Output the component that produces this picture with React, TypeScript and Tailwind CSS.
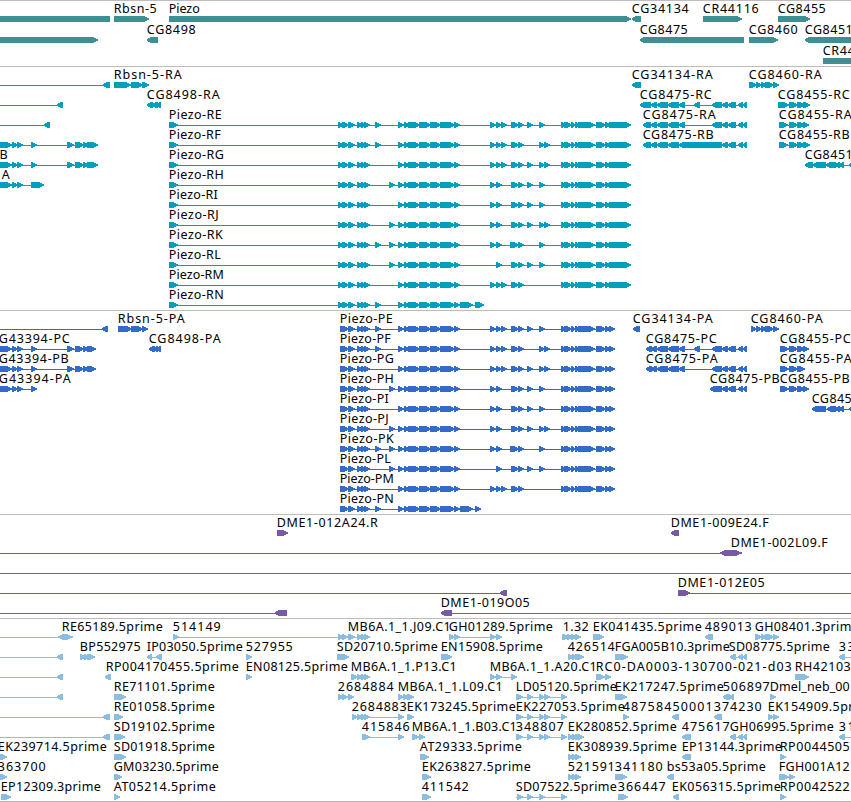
type Label = [x: number, text: string, width: number];
// Each glyph string holds marks separated by spaces: ">a:b" and "<a:b" are
// exons pointing right or left, "=a:b" is a plain bar, "-a:b" an intron line,
// "*a:b" a bar that is pointed at both ends.
type Row = { labels: Label[]; marks: string };
type TrackData = { name: string; color: string; pitch: number; height: number; rows: Row[] };

const r = (marks: string, ...labels: Label[]): Row => ({ marks, labels });

function shape(mark: string): string {
  const [a, b] = mark.slice(1).split(':').map(Number);
  const n = Math.min(5, b - a);
  switch (mark[0]) {
    case '-':
      return `M${a} 3H${b}V4H${a}Z`;
    case '=':
      return `M${a} 0H${b}V6H${a}Z`;
    case '>':
      return `M${a} 0H${b - n + 1}L${b + 0.5} 2.4V3.6L${b - n + 1} 6H${a}Z`;
    case '<':
      return `M${b} 0H${a + n - 1}L${a - 0.5} 2.4V3.6L${a + n - 1} 6H${b}Z`;
    default:
      return `M${a - 0.5} 2.4L${a + n} 0H${b - n}L${b + 0.5} 2.4V3.6L${b - n} 6H${a + n}L${a - 0.5} 3.6Z`;
  }
}

const MID: Record<string, string> = {
  a: '>375:380', b: '>389:394', c: '>490:495', d: '>496:501', e: '>501:506',
  f: '>511:518', F: '>510:518', g: '>518:523', h: '>527:532', i: '>539:544', j: '>544:549',
};
const HEAD = '>342:348 >348:354 >357:362 >361:365 >364:369';
const BODY = '>398:403 >404:409 >408:419 >419:430 >430:440 >440:454 >454:459';
const TAIL = '>561:566 >564:571 >571:575 >575:579 >578:594 >596:605 >605:610';

const pick = (keys: string) => keys.split('').map((k) => MID[k]).join(' ');
const piezoR = (k: string) => `-169:630 >169:177 >338:343 ${HEAD} ${BODY} ${TAIL} >609:630 ${pick(k)}`;
const piezoP = (k: string) => `-340:614 >340:344 ${HEAD} ${BODY} ${TAIL} >609:614 ${pick(k)}`;

const V = {
  E: 'acdefghi',
  F: 'acdefgij',
  G: 'cdefghij',
  H: 'bcdfghi',
  I: 'cdfghi',
  J: 'bcdfghij',
  K: 'abcdFgi',
  L: 'bdfghi',
  M: 'cdefg',
};

const LEFT_START = '>0:11 >12:17 >17:22';
const LEFT = `-0:90 ${LEFT_START} >31:36 >67:73 >75:83 >83:88`;
const C75_A = '<651:657 <657:668 <668:679';
const C75_B = '<722:728 <728:736 <738:743 <743:747';
const C55 = '>789:797 >797:804';
const LD = '-516:562 >516:522 >527:532 >539:544 >544:549 >561:566';
const SD = '-730:747 <730:736 <738:743 <743:747';

const TRACKS: TrackData[] = [
  {
    name: 'genes',
    color: '#3f8e94',
    pitch: 21,
    height: 66,
    rows: [
      r('=0:110 >114:148 >169:630 <632:641 >703:741 >778:809',
        [114, 'Rbsn-5', 43], [169, 'Piezo', 31], [632, 'CG34134', 57], [703, 'CR44116', 56], [778, 'CG8455', 48]),
      r('>0:97 <147:158 <640:744 >749:777 <805:860',
        [147, 'CG8498', 49], [640, 'CG8475', 48], [749, 'CG8460', 49], [805, 'CG8451', 48]),
      r('=823:860', [823, 'CR44', 32]),
    ],
  },
  {
    name: 'transcripts',
    color: '#009ebf',
    pitch: 20,
    height: 244,
    rows: [
      r('-0:105 <103:110 -114:148 >114:130 >131:142 >142:148 <632:641 -749:778 >749:756 >756:761 >761:766 >765:773 >773:778',
        [114, 'Rbsn-5-RA', 68], [632, 'CG34134-RA', 81], [749, 'CG8460-RA', 73]),
      r(`-0:60 <57:63 <147:153 <152:158 <157:161 -640:747 <640:651 ${C75_A} <679:685 <694:700 <712:722 ${C75_B} -778:809 >778:788 ${C55} >803:809`,
        [147, 'CG8498-RA', 73], [640, 'CG8475-RC', 72], [778, 'CG8455-RC', 72]),
      r(`-0:47 <44:50 ${piezoR(V.E)} -643:747 <643:651 ${C75_A} <679:685 <712:722 ${C75_B} -779:808 >779:787 ${C55} >803:808`,
        [169, 'Piezo-RE', 53], [643, 'CG8475-RA', 73], [779, 'CG8455-RA', 73]),
      r(`${LEFT} >87:97 ${piezoR(V.F)} -643:747 <643:651 ${C75_A} <679:722 ${C75_B} -779:809 >779:787 ${C55} >803:809`,
        [169, 'Piezo-RF', 52], [643, 'CG8475-RB', 71], [779, 'CG8455-RB', 71]),
      r(`${LEFT} >87:97 ${piezoR(V.G)} -805:851 <805:813 <813:826 <826:836 <835:840 <839:844 <849:856`,
        [-8, 'RB', 16], [169, 'Piezo-RG', 55], [805, 'CG8451', 48]),
      r(`-0:43 ${LEFT_START} >31:43 ${piezoR(V.H)}`, [-8, 'RA', 18], [169, 'Piezo-RH', 55]),
      r(piezoR(V.I), [169, 'Piezo-RI', 49]),
      r(piezoR(V.J), [169, 'Piezo-RJ', 50]),
      r(piezoR(V.K), [169, 'Piezo-RK', 54]),
      r(piezoR(V.L), [169, 'Piezo-RL', 52]),
      r(piezoR(V.M), [169, 'Piezo-RM', 55]),
      r(`-169:483 >169:177 >338:343 ${HEAD} >375:380 ${BODY} >460:472 >475:483`, [169, 'Piezo-RN', 55]),
    ],
  },
  {
    name: 'proteins',
    color: '#326ccb',
    pitch: 20,
    height: 204,
    rows: [
      r(`-0:105 <102:108 -118:147 >118:131 >131:142 >142:147 ${piezoP(V.E)} <633:640 >751:756 >756:761 >761:766 >765:773 >773:778`,
        [118, 'Rbsn-5-PA', 67], [340, 'Piezo-PE', 53], [633, 'CG34134-PA', 80], [751, 'CG8460-PA', 72]),
      r(`${LEFT} >87:95 <149:155 <154:158 <157:161 ${piezoP(V.F)} -646:747 <646:652 ${C75_A} <679:685 <694:700 <712:722 ${C75_B} -780:808 >780:788 ${C55} >803:808`,
        [-1, 'G43394-PC', 71], [149, 'CG8498-PA', 72], [340, 'Piezo-PF', 51], [646, 'CG8475-PC', 71], [780, 'CG8455-PC', 71]),
      r(`${LEFT} >87:95 ${piezoP(V.G)} -646:747 <646:652 ${C75_A} <679:685 <712:722 ${C75_B} -780:803 >780:788 ${C55}`,
        [-1, 'G43394-PB', 70], [340, 'Piezo-PG', 54], [646, 'CG8475-PA', 72], [780, 'CG8455-PA', 72]),
      r(`-0:36 ${LEFT_START} >31:36 ${piezoP(V.H)} -710:747 <710:722 ${C75_B} -780:808 >780:788 ${C55} >803:808`,
        [-1, 'G43394-PA', 72], [340, 'Piezo-PH', 54], [710, 'CG8475-PB', 70], [780, 'CG8455-PB', 70]),
      r(`${piezoP(V.I)} -812:851 <812:826 <827:836 <835:840 <839:844 <849:856`, [340, 'Piezo-PI', 49], [812, 'CG845', 40]),
      r(piezoP(V.J), [340, 'Piezo-PJ', 49]),
      r(piezoP(V.K), [340, 'Piezo-PK', 54]),
      r(piezoP(V.L), [340, 'Piezo-PL', 51]),
      r(piezoP(V.M), [340, 'Piezo-PM', 54]),
      r(`-340:480 >340:344 ${HEAD} >375:380 ${BODY} >460:472 >475:480`, [340, 'Piezo-PN', 54]),
    ],
  },
  {
    name: 'insertions',
    color: '#7759a6',
    pitch: 20,
    height: 104,
    rows: [
      r('>277:287 <671:679', [277, 'DME1-012A24.R', 101], [671, 'DME1-009E24.F', 98]),
      r('-0:722 *720:741', [731, 'DME1-002L09.F', 97]),
      r('-0:851'),
      r('-0:503 <500:507 >678:689 -688:851', [678, 'DME1-012E05', 87]),
      r('-0:278 <275:287 <441:452 -452:851', [441, 'DME1-019O05', 89]),
    ],
  },
  {
    name: 'cdna',
    color: '#8abddf',
    pitch: 20,
    height: 183,
    rows: [
      r('-0:60 *58:72 -173:364 >173:178 >338:343 >342:347 >348:354 >357:362 >361:365 >364:369 -449:495 >449:454 >454:459 >490:495 >496:501 >562:568 >567:572 >571:576 >575:580 >593:603 <705:713 -755:778 >755:761 >761:766 >765:773 >773:778',
        [62, 'RE65189.5prime', 101], [173, '514149', 48], [348, 'MB6A.1_1.J09.C1', 103], [449, 'GH01289.5prime', 104], [563, '1.32', 26], [593, 'EK041435.5prime', 109], [705, '489013', 47], [755, 'GH08401.3prime', 104]),
      r(`-0:60 <57:63 >80:85 >84:88 >87:94 -147:161 <147:152 <156:162 >246:251 >337:348 >441:451 >568:573 >572:576 >575:583 >615:627 ${SD} <839:845 -845:851`,
        [80, 'BP552975', 61], [147, 'IP03050.5prime', 96], [246, '527955', 47], [337, 'SD20710.5prime', 101], [441, 'EN15908.5prime', 102], [568, '426514', 47], [615, 'FGA005B10.3prime', 115], [729, 'SD08775.5prime', 101], [839, '33', 16]),
      r('-0:60 <57:63 <105:111 >246:251 >351:357 >357:362 >361:365 >364:369 -490:515 >490:495 >496:501 >511:516 -596:608 >596:604 >605:610 >795:808',
        [106, 'RP004170455.5prime', 133], [246, 'EN08125.5prime', 102], [351, 'MB6A.1_1.P13.C1', 106], [490, 'MB6A.1_1.A20.C1', 107], [596, 'RC0-DA0003-130700-021-d03', 196], [795, 'RH42103', 56]),
      r(`-0:60 <57:63 >114:125 >338:343 >342:347 >348:353 >398:403 >403:408 >407:413 ${LD} >615:626 <723:730 <729:734 >770:775`,
        [114, 'RE71101.5prime', 101], [338, '2684884', 56], [398, 'MB6A.1_1.L09.C1', 105], [516, 'LD05120.5prime', 101], [615, 'EK217247.5prime', 109], [723, '506897', 47], [770, 'Dmel_neb_00', 80]),
      r(`-0:107 <103:110 >114:122 -352:400 >352:357 >357:362 >361:365 >364:369 >398:403 >407:413 ${LD} >623:628 <672:679 <714:722 -768:776 >768:773 >773:778`,
        [114, 'RE01058.5prime', 101], [352, '2684883', 55], [407, 'EK173245.5prime', 109], [516, 'EK227053.5prime', 109], [623, '48758450001', 90], [714, '374230', 48], [768, 'EK154909.5prime', 109]),
      r(`-0:107 <103:110 >114:124 -362:400 >362:369 >398:403 -412:422 >412:418 >419:424 ${LD} >568:573 >572:576 >575:583 <682:691 ${SD} <839:845 -845:851`,
        [114, 'SD19102.5prime', 101], [362, '415846', 48], [412, 'MB6A.1_1.B03.C1', 105], [516, '348807', 48], [568, 'EK280852.5prime', 109], [682, '475617', 48], [730, 'GH06995.5prime', 104], [839, '31', 16]),
      r('>-4:6 >114:125 >420:428 >568:573 >572:576 >575:580 <682:691 >780:785',
        [-2, 'EK239714.5prime', 109], [114, 'SD01918.5prime', 101], [420, 'AT29333.5prime', 102], [568, 'EK308939.5prime', 109], [682, 'EP13144.3prime', 100], [780, 'RP0044505', 70]),
      r('>-4:6 >114:121 >422:430 >568:573 >572:576 >575:580 >615:626 <667:674 -779:792 >779:788 >789:794',
        [-2, '363700', 48], [114, 'GM03230.5prime', 105], [422, 'EK263827.5prime', 109], [568, '521591', 47], [615, '341180', 48], [667, 'bs53a05.5prime', 99], [779, 'FGH001A12', 71]),
      r('>1:10 >114:119 >422:430 -516:562 >517:522 >527:532 >539:544 >561:566 >618:627 <673:679 >780:785',
        [1, 'EP12309.3prime', 100], [114, 'AT05214.5prime', 102], [422, '411542', 47], [516, 'SD07522.5prime', 101], [618, '366447', 48], [672, 'EK056315.5prime', 109], [780, 'RP0042522', 70]),
    ],
  },
];

function FeatureRow({ row, color, pitch }: { row: Row; color: string; pitch: number }) {
  return (
    <svg className="block shrink-0 overflow-visible" width="851" height={pitch}>
      <g transform="translate(0 15)" fill={color} shapeRendering="crispEdges">
        {row.marks.split(' ').map((m, i) => (
          <path key={i} d={shape(m)} />
        ))}
      </g>
      {row.labels.map(([x, text, width]) => (
        <text key={`${x}${text}`} x={x - 0.25} y={12} textLength={width} fill="#000">
          {text}
        </text>
      ))}
    </svg>
  );
}

function Track({ track }: { track: TrackData }) {
  return (
    <section
      aria-label={track.name}
      className="flex shrink-0 flex-col border-t border-[#bdbdbd]"
      style={{ height: track.height }}
    >
      {track.rows.map((row, i) => (
        <FeatureRow key={i} row={row} color={track.color} pitch={track.pitch} />
      ))}
    </section>
  );
}

export default function App() {
  return (
    <main className="flex h-[802px] w-[851px] flex-col overflow-hidden bg-white font-['Noto_Sans',sans-serif] text-[12.5px]">
      {TRACKS.map((t) => (
        <Track key={t.name} track={t} />
      ))}
      <div className="h-px shrink-0 bg-[#bdbdbd]" />
    </main>
  );
}
